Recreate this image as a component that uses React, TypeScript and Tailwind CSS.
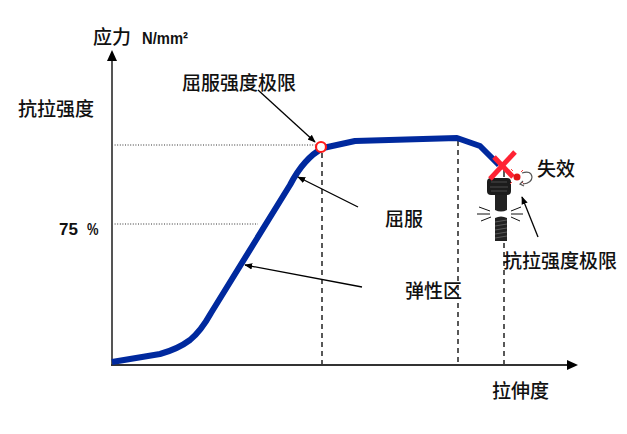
const cjk = "font-['Noto_Sans_CJK_SC',sans-serif] font-medium text-[19px] fill-[#111]";
const latin = "font-['Liberation_Sans',Arial,sans-serif] font-bold fill-[#111]";

export default function App() {
  return (
    <div className="w-[627px] h-[434px] bg-white overflow-hidden">
      <svg width="627" height="434" viewBox="0 0 627 434" className="block">
        <defs>
          <marker id="tip" viewBox="0 0 10 10" refX="9" refY="5" markerWidth="8" markerHeight="8" orient="auto-start-reverse" markerUnits="userSpaceOnUse">
            <path d="M0,1 L10,5 L0,9 z" fill="#000" />
          </marker>
        </defs>

        {/* guide lines */}
        <line x1="112" y1="145" x2="316" y2="145" stroke="#333" strokeWidth="1" strokeDasharray="1 1.6" />
        <line x1="112" y1="224" x2="258" y2="224" stroke="#333" strokeWidth="1" strokeDasharray="1 1.6" />
        <line x1="322" y1="153" x2="322" y2="365" stroke="#222" strokeWidth="1.5" strokeDasharray="5 4" />
        <line x1="458" y1="141" x2="458" y2="365" stroke="#222" strokeWidth="1.5" strokeDasharray="5 4" />
        <line x1="504" y1="243" x2="504" y2="365" stroke="#222" strokeWidth="1.5" strokeDasharray="5 4" />
        <line x1="504" y1="165" x2="504" y2="177" stroke="#222" strokeWidth="1.5" />

        {/* axes */}
        <line x1="112" y1="60" x2="112" y2="365" stroke="#555" strokeWidth="2" />
        <path d="M112,50 L107,61 L117,61 z" fill="#000" />
        <line x1="111" y1="365" x2="568" y2="365" stroke="#333" strokeWidth="2" />
        <path d="M578,365 L567,360 L567,370 z" fill="#000" />

        {/* stress curve */}
        <path
          d="M112,362 L160,354 Q178,349 190,340 Q201,331 211,313 L290,185 Q304,158 323,148 L355,141 L457,138 L480,146 L499,165"
          fill="none"
          stroke="#00299e"
          strokeWidth="6"
          strokeLinejoin="round"
        />
        <circle cx="321" cy="147" r="5" fill="#fff" stroke="#ff1a1a" strokeWidth="2.2" />

        {/* label arrows */}
        <line x1="258" y1="90" x2="315" y2="142" stroke="#000" strokeWidth="1.3" markerEnd="url(#tip)" />
        <line x1="358" y1="207" x2="298" y2="177" stroke="#000" strokeWidth="1.3" markerEnd="url(#tip)" />
        <line x1="362" y1="287" x2="245" y2="265" stroke="#000" strokeWidth="1.3" markerEnd="url(#tip)" />
        <line x1="538" y1="237" x2="522" y2="197" stroke="#000" strokeWidth="1.3" markerEnd="url(#tip)" />

        {/* broken bolt */}
        <rect x="487" y="178" width="24" height="17" rx="4" fill="#1c1c1c" />
        <path d="M491,182 h16 M490,187 h18 M491,191 h16" stroke="#4a4a4a" strokeWidth="1" />
        <path d="M495,195 h12 v15 q-6,3 -12,0 z" fill="#222" />
        <path d="M495,218 q6,-3 12,0 v23 h-12 z" fill="#222" />
        <path d="M495,222 l12,-2 M495,226 l12,-2 M495,230 l12,-2 M495,234 l12,-2 M495,238 l12,-2" stroke="#5a5a5a" strokeWidth="1" />
        <path d="M479,207 l11,4 M477,214 h13 M481,221 l10,-4 M511,211 l10,-4 M511,214 h12 M511,217 l9,4" stroke="#111" strokeWidth="1" />

        {/* red X and spark */}
        <line x1="515" y1="152" x2="490" y2="179" stroke="#ff2233" strokeWidth="5" />
        <line x1="494" y1="157" x2="513" y2="177" stroke="#ff2233" strokeWidth="5" />
        <circle cx="517" cy="177" r="3.5" fill="#e01515" />
        <path d="M513,171 l-2,-2 M521,172 l2,-2 M512,182 l-2,2 M522,182 l2,2" stroke="#ff4040" strokeWidth="1" />
        <path d="M522,173 q9,-3 10,4 q0,6 -9,7" fill="none" stroke="#555" strokeWidth="1.2" />
        <path d="M523,181 l-3,3 l4,2" fill="none" stroke="#555" strokeWidth="1.2" />

        {/* labels */}
        <text x="93" y="44" className={cjk}>应力</text>
        <text x="142" y="44" className={`${latin} text-[17px]`} textLength="46" lengthAdjust="spacingAndGlyphs">N/mm²</text>
        <text x="18" y="116" className={cjk}>抗拉强度</text>
        <text x="59" y="234.5" className={`${latin} text-[17px]`}>75</text>
        <text x="87" y="234.5" className={`${latin} text-[17px]`} textLength="11.5" lengthAdjust="spacingAndGlyphs">%</text>
        <text x="182" y="90" className={cjk}>屈服强度极限</text>
        <text x="385" y="226" className={cjk}>屈服</text>
        <text x="405" y="298" className={cjk}>弹性区</text>
        <text x="537" y="176" className={cjk}>失效</text>
        <text x="503" y="268" className={cjk}>抗拉强度极限</text>
        <text x="492" y="398" className={cjk}>拉伸度</text>
      </svg>
    </div>
  );
}
